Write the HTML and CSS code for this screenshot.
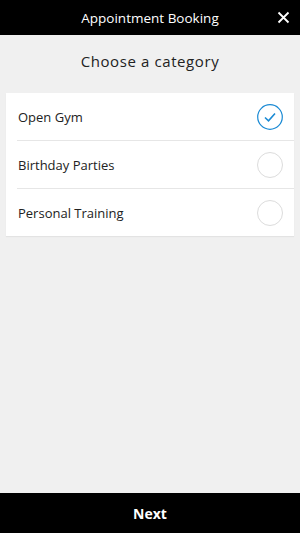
FILE: index.html
```html
<!DOCTYPE html>
<html lang="en">
<head>
    <meta charset="UTF-8">
    <meta name="viewport" content="width=device-width, initial-scale=1.0">
    <title>Appointment Booking</title>
    <link rel="stylesheet" href="styles.css">
</head>
<body>
    <div class="app">
        <div class="header">
            <h1>Appointment Booking</h1>
            <span class="close">
                <svg width="13" height="13" viewBox="0 0 13 13"><path d="M1.5 1.5 L11.5 11.5 M11.5 1.5 L1.5 11.5" stroke="#fff" stroke-width="1.8" fill="none"/></svg>
            </span>
        </div>

        <div class="content">
            <h2>Choose a category</h2>
            <div class="card">
                <div class="row">
                    <span>Open Gym</span>
                    <span class="check selected">
                        <svg width="26" height="26" viewBox="0 0 26 26"><circle cx="13" cy="13" r="12.3" fill="none" stroke="#1a8ad4" stroke-width="1.2"/><path d="M8 13.5 L11.5 16.8 L18 9.5" fill="none" stroke="#1a8ad4" stroke-width="1.6"/></svg>
                    </span>
                </div>
                <div class="row">
                    <span>Birthday Parties</span>
                    <span class="check"></span>
                </div>
                <div class="row">
                    <span>Personal Training</span>
                    <span class="check"></span>
                </div>
            </div>
        </div>

        <div class="footer">Next</div>
    </div>
</body>
</html>
```

FILE: styles.css
```css
body {
    margin: 0;
    padding: 0;
    font-family: "Open Sans", Arial, sans-serif;
    background: #f0f0f0;
}

.app {
    display: flex;
    flex-direction: column;
    height: 533px;
}

.header {
    position: relative;
    height: 35px;
    background: #000;
    color: #fff;
    display: flex;
    align-items: center;
    justify-content: center;
}

.header h1 {
    margin: 0;
    font-size: 13.5px;
    font-weight: normal;
}

.header .close {
    position: absolute;
    right: 10px;
    top: 11px;
    line-height: 0;
}

.content {
    flex: 1;
    padding: 0 6px;
}

.content h2 {
    margin: 0;
    padding: 16px 0 22px;
    text-align: center;
    font-size: 15px;
    font-weight: normal;
    letter-spacing: 0.6px;
    color: #222;
}

.card {
    background: #fff;
    padding-left: 11px;
    box-shadow: 0 1px 1px rgba(0, 0, 0, 0.05);
}

.row {
    display: flex;
    align-items: center;
    justify-content: space-between;
    height: 47px;
    padding-right: 11px;
    font-size: 13px;
    color: #222;
    border-bottom: 1px solid #e6e6e6;
}

.row span:first-child {
    padding-left: 1px;
}

.row:last-child {
    border-bottom: none;
}

.check {
    width: 24px;
    height: 24px;
    border: 1px solid #dcdcdc;
    border-radius: 50%;
}

.check.selected {
    width: 26px;
    height: 26px;
    border: none;
    line-height: 0;
}

.footer {
    height: 40px;
    background: #000;
    color: #fff;
    display: flex;
    align-items: center;
    justify-content: center;
    font-size: 14px;
    font-weight: bold;
}
```
